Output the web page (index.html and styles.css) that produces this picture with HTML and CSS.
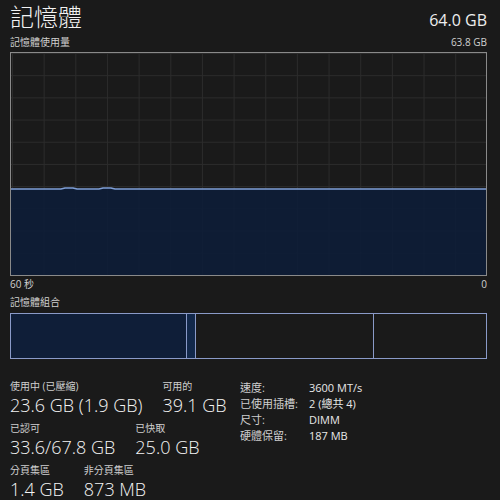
FILE: index.html
```html
<!DOCTYPE html>
<html lang="zh-Hant">
<head>
<meta charset="utf-8">
<link rel="stylesheet" href="styles.css">
</head>
<body>
<div class="page">
  <div class="header">
    <div class="title">記憶體</div>
    <div class="total">64.0 GB</div>
  </div>
  <div class="caption-row">
    <span>記憶體使用量</span>
    <span>63.8 GB</span>
  </div>
  <div class="graph">
    <svg class="graph-svg" viewBox="0 0 475 222" preserveAspectRatio="none">
      <path class="area" d="M0 136 L50 136 L54 135 L62 135 L66 136 L88 136 L92 135 L100 135 L104 136 L475 136 L475 222 L0 222 Z"/>
      <path class="line" d="M0 136 L50 136 L54 135 L62 135 L66 136 L88 136 L92 135 L100 135 L104 136 L475 136"/>
    </svg>
  </div>
  <div class="axis-row">
    <span>60 秒</span>
    <span>0</span>
  </div>
  <div class="caption-row comp-caption">
    <span>記憶體組合</span>
  </div>
  <div class="comp">
    <div class="seg seg-used" style="width:36.84%"></div>
    <div class="seg seg-mod" style="width:1.9%"></div>
    <div class="seg seg-standby" style="width:37.47%"></div>
    <div class="seg seg-free"></div>
  </div>
  <div class="stats">
    <div class="stats-left">
      <div class="stat-row">
        <div class="stat"><div class="stat-label">使用中 (已壓縮)</div><div class="stat-value">23.6 GB (1.9 GB)</div></div>
        <div class="stat"><div class="stat-label">可用的</div><div class="stat-value">39.1 GB</div></div>
      </div>
      <div class="stat-row">
        <div class="stat"><div class="stat-label">已認可</div><div class="stat-value">33.6/67.8 GB</div></div>
        <div class="stat"><div class="stat-label">已快取</div><div class="stat-value">25.0 GB</div></div>
      </div>
      <div class="stat-row">
        <div class="stat"><div class="stat-label">分頁集區</div><div class="stat-value">1.4 GB</div></div>
        <div class="stat"><div class="stat-label">非分頁集區</div><div class="stat-value">873 MB</div></div>
      </div>
    </div>
    <div class="props">
      <div class="prop-label">速度:</div><div class="prop-value">3600 MT/s</div>
      <div class="prop-label">已使用插槽:</div><div class="prop-value">2 (總共 4)</div>
      <div class="prop-label">尺寸:</div><div class="prop-value">DIMM</div>
      <div class="prop-label">硬體保留:</div><div class="prop-value">187 MB</div>
    </div>
  </div>
</div>
</body>
</html>
```

FILE: styles.css
```css
html, body {
  margin: 0;
  padding: 0;
  background: #1a1a1a;
}
body {
  font-family: "Open Sans", "Noto Sans CJK TC", sans-serif;
  color: #f2f2f2;
}
.page {
  padding: 0 13px 0 10px;
  width: 477px;
}
.header {
  display: flex;
  justify-content: space-between;
  align-items: baseline;
  height: 34px;
}
.title {
  font-family: "Noto Sans CJK TC", sans-serif;
  font-size: 24px;
  font-weight: 300;
  line-height: 32px;
}
.total {
  font-size: 16px;
  font-weight: 400;
  line-height: 20px;
  color: #eeeeee;
}
.caption-row {
  display: flex;
  justify-content: space-between;
  font-size: 10px;
  line-height: 16px;
  color: #d0d0d0;
}
.graph {
  margin-top: 2px;
  height: 222px;
  border: 1px solid #8a8a8a;
  background-color: #1a1a1a;
  background-image:
    linear-gradient(to right, #2b2b2b 1px, transparent 1px),
    linear-gradient(to bottom, #2b2b2b 1px, transparent 1px);
  background-size: calc(100% / 15) calc(100% / 10);
  background-position: 1px 0, 0 0;
}
.graph-svg {
  display: block;
  width: 100%;
  height: 100%;
}
.area {
  fill: rgba(12, 28, 56, 0.88);
}
.line {
  fill: none;
  stroke: #7f9fd6;
  stroke-width: 1.5;
}
.axis-row {
  display: flex;
  justify-content: space-between;
  font-size: 10px;
  line-height: 16px;
  color: #d0d0d0;
}
.comp-caption {
  margin-top: 2px;
}
.comp {
  margin-top: 3px;
  height: 44px;
  display: flex;
  border: 1px solid #8a9ac8;
}
.seg {
  box-sizing: border-box;
  height: 100%;
}
.seg + .seg {
  border-left: 1px solid #8a9ac8;
}
.seg-used {
  background: #0f1e38;
}
.seg-mod {
  background: #12284a;
}
.seg-free {
  flex: 1;
}
.stats {
  display: flex;
  margin-top: 19px;
}
.stats-left {
  width: 230px;
  display: flex;
  flex-direction: column;
  gap: 3px;
}
.stat-row {
  display: flex;
  gap: 20px;
}
.stat-label {
  font-size: 10px;
  line-height: 16px;
  color: #cfcfcf;
}
.stat-value {
  font-size: 18px;
  font-weight: 300;
  line-height: 23px;
  color: #f4f4f4;
}
.props {
  display: grid;
  grid-template-columns: 69px auto;
  align-content: start;
  font-size: 11px;
  line-height: 16px;
  margin-top: 2px;
}
.prop-label {
  color: #cfcfcf;
}
.prop-value {
  color: #e8e8e8;
}
```
